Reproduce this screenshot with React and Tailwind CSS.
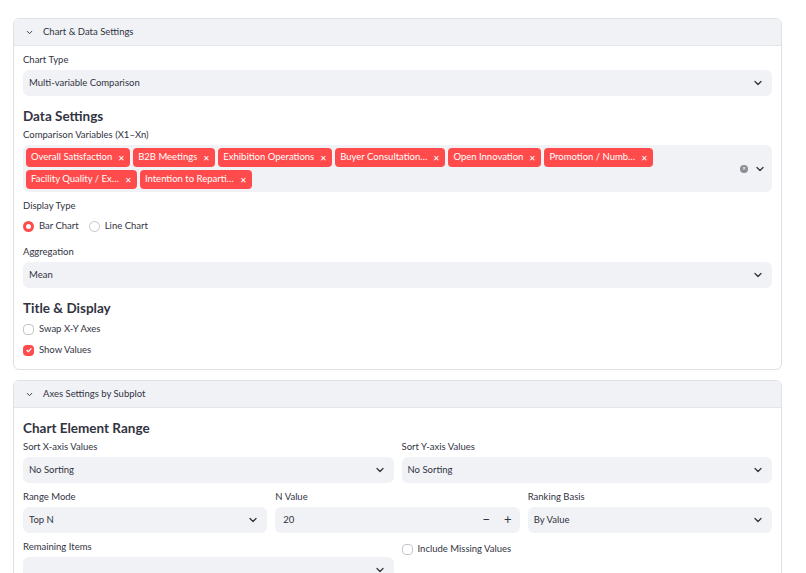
import React from "react";

const Chevron = ({ className = "" }) => (
  <svg viewBox="0 0 24 24" className={"w-3 h-3 " + className} fill="none" stroke="#31333f" strokeWidth="2.5" strokeLinecap="round" strokeLinejoin="round">
    <path d="M6 9l6 6 6-6" />
  </svg>
);

const Label = ({ children }) => <div className="text-[9.5px] text-[#31333f] h-[12px] leading-[12px] mb-[4px]">{children}</div>;

const Select = ({ value }) => (
  <div className="h-[26px] rounded-md bg-[#f0f2f6] flex items-center justify-between px-[6px] text-[9.5px] text-[#31333f]">
    <span>{value}</span>
    <Chevron className="mr-[2px]" />
  </div>
);

const Tag = ({ t }) => (
  <div className="h-[19px] rounded bg-[#ff4b4b] text-white text-[9.5px] flex items-center pl-[5px] pr-[5px] gap-[6px]">
    <span>{t}</span>
    <span className="text-[8px]">✕</span>
  </div>
);

const Header = ({ title }) => (
  <div className="h-[27px] bg-[#f0f2f6] border-b border-[#e3e5ea] rounded-t-md flex items-center pl-[11px] gap-[9px] text-[9.5px] text-[#31333f]">
    <Chevron className="w-[9px] h-[9px]" />
    <span>{title}</span>
  </div>
);

const H = ({ children, className = "" }) => <div className={"text-[13.5px] font-bold leading-[16px] h-[16px] text-[#31333f] " + className}>{children}</div>;

export default function App() {
  const tags = ["Overall Satisfaction", "B2B Meetings", "Exhibition Operations", "Buyer Consultation…", "Open Innovation", "Promotion / Numb…", "Facility Quality / Ex…", "Intention to Reparti…"];
  return (
    <div className="w-[806px] h-[573px] overflow-hidden bg-white pt-[18px] px-[13px]" style={{ fontFamily: "Lato, 'Noto Sans', sans-serif" }}>
      <div className="w-[769px] border border-[#dfe1e6] rounded-md">
        <Header title="Chart & Data Settings" />
        <div className="px-[9px] pt-[8px] pb-[10px]">
          <Label>Chart Type</Label>
          <Select value="Multi-variable Comparison" />
          <H className="mt-[12px] mb-[5px]">Data Settings</H>
          <Label>Comparison Variables (X1–Xn)</Label>
          <div className="rounded-md bg-[#f0f2f6] flex items-center px-[3px] py-[3px]">
            <div className="flex flex-wrap gap-[3px] w-[712px]">
              {tags.map(t => <Tag key={t} t={t} />)}
            </div>
            <div className="flex items-center gap-[6px] ml-auto mr-[3px]">
              <span className="w-[8px] h-[8px] rounded-full bg-[#8a8c94] flex items-center justify-center text-white text-[5px]">✕</span>
              <Chevron />
            </div>
          </div>
          <div className="mt-[8px]"><Label>Display Type</Label></div>
          <div className="flex items-center gap-[10px] text-[9.5px] text-[#31333f] h-[20px]">
            <div className="flex items-center gap-[5px]"><span className="w-[11px] h-[11px] rounded-full border-[3px] border-[#ff4b4b]" />Bar Chart</div>
            <div className="flex items-center gap-[5px]"><span className="w-[11px] h-[11px] rounded-full border border-[#c4c6cc]" />Line Chart</div>
          </div>
          <div className="mt-[10px]"><Label>Aggregation</Label></div>
          <Select value="Mean" />
          <H className="mt-[12px] mb-[4px]">Title &amp; Display</H>
          <div className="flex items-center gap-[5px] text-[9.5px] text-[#31333f] h-[18px]"><span className="w-[11px] h-[11px] rounded-sm border border-[#c4c6cc]" />Swap X-Y Axes</div>
          <div className="flex items-center gap-[5px] text-[9.5px] text-[#31333f] h-[18px] mt-[3px]">
            <span className="w-[11px] h-[11px] rounded-sm bg-[#ff4b4b] flex items-center justify-center">
              <svg viewBox="0 0 24 24" className="w-[8px] h-[8px]" fill="none" stroke="white" strokeWidth="4"><path d="M5 12l5 5 9-10" /></svg>
            </span>Show Values</div>
        </div>
      </div>
      <div className="w-[769px] border border-[#dfe1e6] rounded-md mt-[10px] h-[200px]">
        <Header title="Axes Settings by Subplot" />
        <div className="px-[9px] pt-[12px]">
          <H className="mb-[5px]">Chart Element Range</H>
          <div className="grid grid-cols-2 gap-[8px]">
            <div><Label>Sort X-axis Values</Label><Select value="No Sorting" /></div>
            <div><Label>Sort Y-axis Values</Label><Select value="No Sorting" /></div>
          </div>
          <div className="grid grid-cols-3 gap-[8px] mt-[8px]">
            <div><Label>Range Mode</Label><Select value="Top N" /></div>
            <div><Label>N Value</Label>
              <div className="h-[26px] rounded-md bg-[#f0f2f6] flex items-center px-[8px] text-[9.5px] text-[#31333f]">
                <span>20</span>
                <span className="ml-auto text-[13px] mr-[14px]">−</span>
                <span className="text-[13px]">+</span>
              </div>
            </div>
            <div><Label>Ranking Basis</Label><Select value="By Value" /></div>
          </div>
          <div className="grid grid-cols-2 gap-[8px] mt-[8px]">
            <div><Label>Remaining Items</Label><Select value="" /></div>
            <div className="flex items-center gap-[5px] text-[9.5px] text-[#31333f] h-[14px] mt-[1px]"><span className="w-[11px] h-[11px] rounded-sm border border-[#c4c6cc]" />Include Missing Values</div>
          </div>
        </div>
      </div>
    </div>
  );
}
